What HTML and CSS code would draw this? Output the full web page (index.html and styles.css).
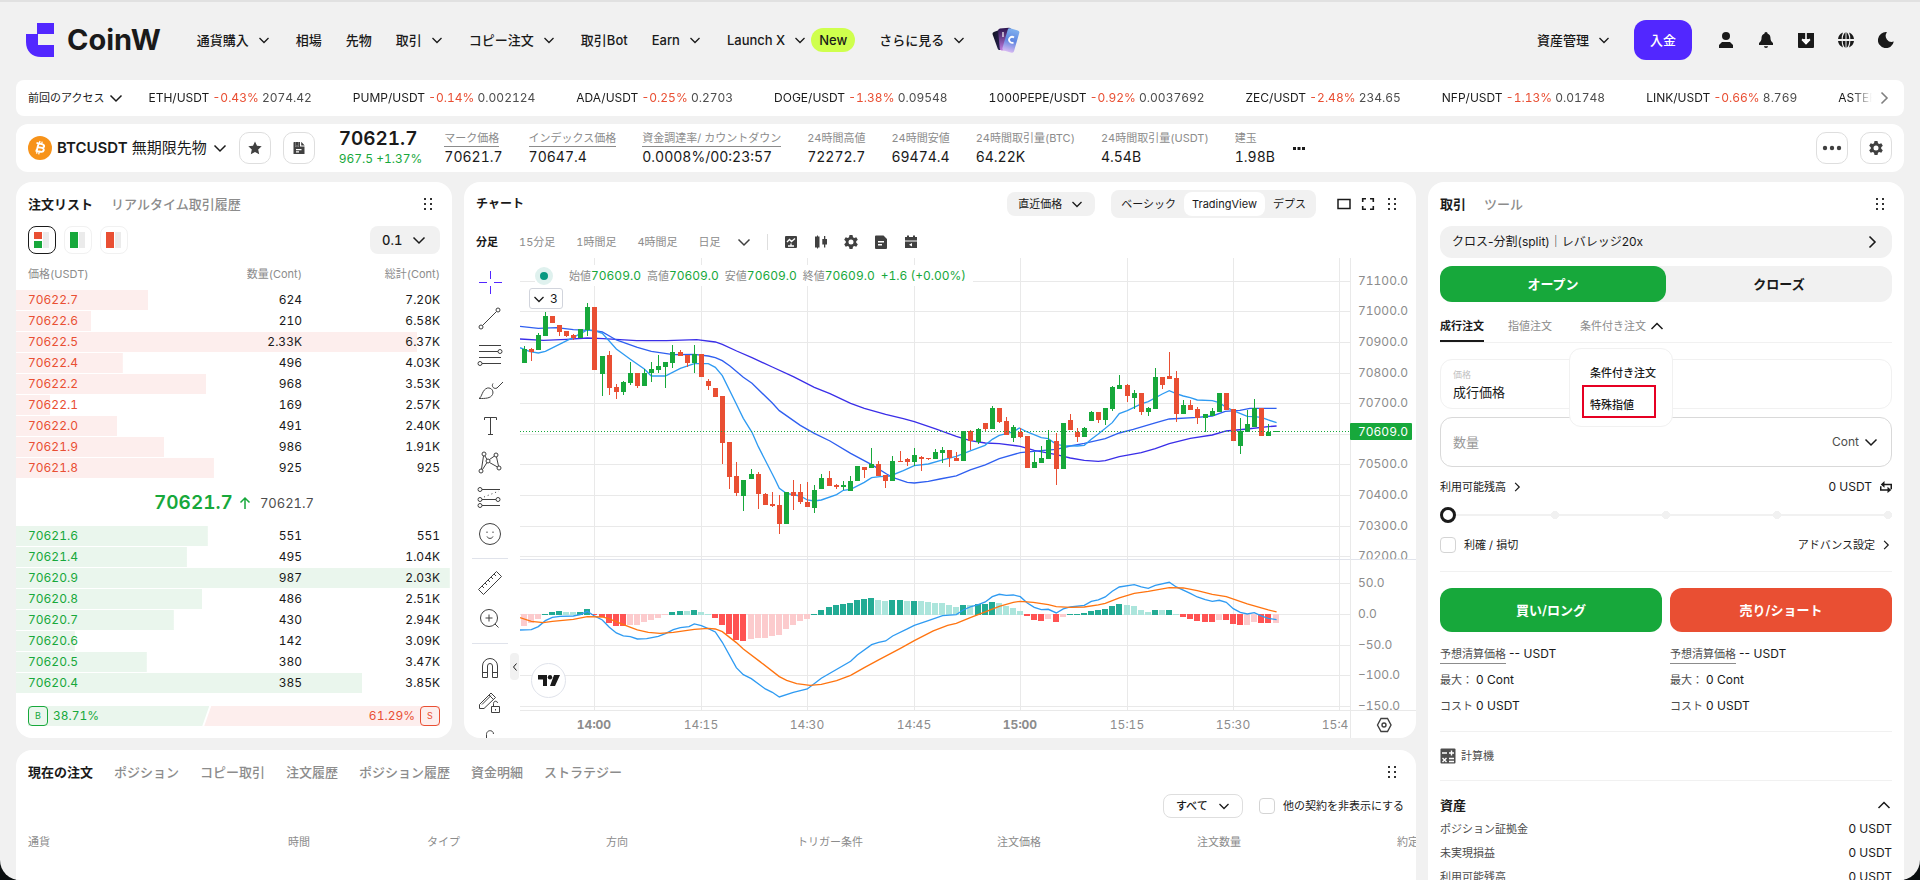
FILE: index.html
```html
<!DOCTYPE html>
<html lang="ja">
<head>
    <meta charset="UTF-8">
    <meta name="viewport" content="width=device-width, initial-scale=1.0">
    <title>BTCUSDT 無期限先物 | CoinW</title>
    <link rel="stylesheet" href="styles.css">
</head>
<body>
    <svg class="sprite" aria-hidden="true">
        <symbol id="chevron" viewBox="0 0 16 16"><path d="M3.500 6l4.500 4.500L12.500 6" fill="none" stroke="currentColor" stroke-width="1.300"/></symbol>
        <symbol id="chevron-bold" viewBox="0 0 16 16"><path d="M2.500 5.500L8 11l5.500-5.500" fill="none" stroke="currentColor" stroke-width="1.500"/></symbol>
        <symbol id="chevron-up" viewBox="0 0 16 16"><path d="M2.500 11L8 5.500l5.500 5.500" fill="none" stroke="currentColor" stroke-width="1.500"/></symbol>
        <symbol id="arrow-right" viewBox="0 0 16 16"><path d="M5.500 2.500L11 8l-5.500 5.500" fill="none" stroke="currentColor" stroke-width="1.600"/></symbol>
        <symbol id="grip" viewBox="0 0 16 16"><path d="M4 2h2v2H4zM10 2h2v2h-2zM4 7h2v2H4zM10 7h2v2h-2zM4 12h2v2H4zM10 12h2v2h-2z" fill="currentColor"/></symbol>
        <symbol id="gear" viewBox="0 0 16 16"><path fill-rule="evenodd" d="M6.500 1h3l.5 2.200 1.200.7 2.100-.7 1.500 2.600-1.600 1.500v1.400l1.600 1.500-1.500 2.600-2.100-.7-1.200.7L9.500 15h-3L6 12.800l-1.200-.7-2.100.7-1.500-2.600 1.600-1.500V7.300L1.200 5.800l1.500-2.600 2.100.7L6 3.200zM8 5.500a2.500 2.500 0 1 0 0 5 2.500 2.500 0 0 0 0-5z" fill="currentColor"/></symbol>
    </svg>

    <div class="window">
        <header class="header">
            <a class="logo" href="#">
                <svg width="28" height="34" viewBox="0 0 28 34" aria-hidden="true"><path d="M11 0h17v11H12v11h16v12H15C6 34 0 28 0 19v-8h11z" fill="#5227ff"/></svg>
                <span>CoinW</span>
            </a>
            <nav class="nav">
                <a href="#">通貨購入<svg class="icon"><use href="#chevron"/></svg></a>
                <a href="#">相場</a>
                <a href="#">先物</a>
                <a href="#">取引<svg class="icon"><use href="#chevron"/></svg></a>
                <a href="#">コピー注文<svg class="icon"><use href="#chevron"/></svg></a>
                <a href="#">取引Bot</a>
                <a href="#">Earn<svg class="icon"><use href="#chevron"/></svg></a>
                <a href="#">Launch X<svg class="icon"><use href="#chevron"/></svg><span class="badge">New</span></a>
                <a href="#">さらに見る<svg class="icon"><use href="#chevron"/></svg></a>
                <a href="#" aria-label="カード">
                    <svg width="32" height="28" viewBox="0 0 32 28">
                        <defs>
                            <linearGradient id="card-a" x1="0" y1="0" x2="1" y2="1"><stop offset="0" stop-color="#10121f"/><stop offset="1" stop-color="#3b2f7a"/></linearGradient>
                            <linearGradient id="card-b" x1="0" y1="0" x2="0" y2="1"><stop offset="0" stop-color="#2c1450"/><stop offset="1" stop-color="#c07be0"/></linearGradient>
                            <linearGradient id="card-c" x1="0" y1="0" x2="0" y2="1"><stop offset="0" stop-color="#7fb0ee"/><stop offset=".5" stop-color="#5f86e0"/><stop offset="1" stop-color="#d5b8f2"/></linearGradient>
                        </defs>
                        <rect x="4" y="4" width="11" height="19" rx="2" transform="rotate(-20 10 14)" fill="url(#card-a)"/>
                        <rect x="8" y="2" width="13" height="22" rx="2" transform="rotate(-5 15 14)" fill="url(#card-b)"/>
                        <path d="M12 6v5" stroke="#fff" stroke-width="1.200"/>
                        <rect x="14" y="3" width="12" height="23" rx="2" transform="rotate(16 20 14)" fill="url(#card-c)"/>
                        <path d="M23 11.500a3 3 0 1 0-.5 5" fill="none" stroke="#fff" stroke-width="1.800"/>
                    </svg>
                </a>
            </nav>
            <div class="account">
                <a href="#">資産管理<svg class="icon"><use href="#chevron"/></svg></a>
                <button class="deposit" type="button">入金</button>
                <button class="plain" type="button" aria-label="アカウント"><svg class="icon" viewBox="0 0 16 16"><circle cx="8" cy="4" r="4" fill="currentColor"/><path d="M4 10h8l3 3v3H1v-3z" fill="currentColor"/></svg></button>
                <button class="plain" type="button" aria-label="通知"><svg class="icon" viewBox="0 0 16 16"><path d="M8 0c1.200 0 1.500.8 1.500 1.600C12 2.600 12.500 4.500 12.500 6.500c0 2 1 3 2.500 4.500v2H1v-2c1.500-1.500 2.500-2.500 2.500-4.500 0-2 .5-3.900 3-4.900C6.500.8 6.800 0 8 0zM6 14.300h4c0 1-1 1.700-2 1.700s-2-.7-2-1.700z" fill="currentColor"/></svg></button>
                <button class="plain" type="button" aria-label="ダウンロード"><svg class="icon" viewBox="0 0 16 16"><path d="M0 1h5.500v5L3.800 7.200 8 11.800l4.200-4.600L10.500 6V1H16v14a1 1 0 0 1-1 1H1a1 1 0 0 1-1-1z" fill="currentColor"/><path d="M8 1v10.500M4 7.500l4 4 4-4" fill="none" stroke="#fff" stroke-width="1.600"/><path d="M5 1h2.200v6H5zM8.800 1H11v6H8.800z" fill="currentColor"/></svg></button>
                <button class="plain" type="button" aria-label="言語"><svg class="icon" viewBox="0 0 16 16"><path d="M3.700 7H0a8 8 0 0 1 5-6.400A14 14 0 0 0 3.700 7zM4.700 7C4.900 3.500 6 1 7.500.2V7zM8.500.2C10 1 11.100 3.500 11.300 7H8.500zM11 .6A8 8 0 0 1 16 7h-3.700A14 14 0 0 0 11 .6zM0 9h3.700A14 14 0 0 0 5 15.400 8 8 0 0 1 0 9zM4.700 9h2.800v6.800C6 15 4.900 12.500 4.700 9zM8.500 9h2.800c-.2 3.500-1.300 6-2.800 6.800zM12.300 9H16a8 8 0 0 1-5 6.400A14 14 0 0 0 12.300 9z" fill="currentColor"/></svg></button>
                <button class="plain" type="button" aria-label="ダークモード"><svg class="icon" viewBox="0 0 16 16"><path d="M9 .2A6 6 0 0 0 15.800 9.500 8 8 0 1 1 9 .2z" fill="currentColor"/></svg></button>
            </div>
        </header>

        <div class="ticker">
            <button class="ticker-label" type="button">前回のアクセス<svg class="icon"><use href="#chevron-bold"/></svg></button>
            <div class="ticker-list">
                <a href="#">ETH/USDT <em>-0.43%</em> <span>2074.42</span></a>
                <a href="#">PUMP/USDT <em>-0.14%</em> <span>0.002124</span></a>
                <a href="#">ADA/USDT <em>-0.25%</em> <span>0.2703</span></a>
                <a href="#">DOGE/USDT <em>-1.38%</em> <span>0.09548</span></a>
                <a href="#">1000PEPE/USDT <em>-0.92%</em> <span>0.0037692</span></a>
                <a href="#">ZEC/USDT <em>-2.48%</em> <span>234.65</span></a>
                <a href="#">NFP/USDT <em>-1.13%</em> <span>0.01748</span></a>
                <a href="#">LINK/USDT <em>-0.66%</em> <span>8.769</span></a>
                <a href="#">ASTER/USDT</a>
            </div>
            <button class="plain ticker-next" type="button" aria-label="次へ"><svg class="icon"><use href="#arrow-right"/></svg></button>
        </div>

        <div class="symbol-bar">
            <button class="symbol" type="button">
                <svg width="24" height="24" viewBox="0 0 24 24" aria-hidden="true"><circle cx="12" cy="12" r="12" fill="#f7931a"/><path d="M8.500 6.800l6 1.500c2.500.8 2 3.700-.5 3.500 3 .8 2 4.700-1.500 3.900l-5-1.200M10.600 7.300l-2 8M9.500 11l4.500.9" fill="none" stroke="#fff" stroke-width="1.900"/><path d="M12 5l-.6 2.500M14.200 5.600l-.6 2.500M9.200 15l-.6 2.700M11.300 15.600l-.6 2.700" fill="none" stroke="#fff" stroke-width="1.300"/></svg>
                <strong>BTCUSDT <span>無期限先物</span></strong>
                <svg class="icon"><use href="#chevron-bold"/></svg>
            </button>
            <button class="square" type="button" aria-label="お気に入り"><svg class="icon" viewBox="0 0 16 16"><path d="M8 1.500l2 4.300 4.700.5-3.500 3.200 1 4.700L8 11.900l-4.200 2.300 1-4.700L1.300 6.300 6 5.800z" fill="currentColor"/></svg></button>
            <button class="square" type="button" aria-label="契約情報"><svg class="icon" viewBox="0 0 16 16"><path fill-rule="evenodd" d="M3 2h1.500v5L6 5.800 7.500 7V2H9v4.500h4.500V14h-11V2.500zM5 9v1.200h5.500V9zM5 11.300v1.200h3v-1.200zM10.200 1.800l3.500 3.600h-3.500z" fill="currentColor"/><path d="M4.500 2h3v4.500L6 5.500 4.500 6.500z" fill="currentColor"/></svg></button>
            <div class="last-price">
                <strong>70621.7</strong>
                <span>967.5 +1.37%</span>
            </div>
            <dl class="stats">
                <div><dt class="hint">マーク価格</dt><dd>70621.7</dd></div>
                <div><dt class="hint">インデックス価格</dt><dd>70647.4</dd></div>
                <div><dt class="hint">資金調達率/ カウントダウン</dt><dd>0.0008%/00:23:57</dd></div>
                <div><dt>24時間高値</dt><dd>72272.7</dd></div>
                <div><dt>24時間安値</dt><dd>69474.4</dd></div>
                <div><dt>24時間取引量(BTC)</dt><dd>64.22K</dd></div>
                <div><dt>24時間取引量(USDT)</dt><dd>4.54B</dd></div>
                <div><dt>建玉</dt><dd>1.98B</dd></div>
            </dl>
            <button class="plain" type="button" aria-label="詳細"><svg class="icon" viewBox="0 0 16 16"><path d="M2 7h3v3H2zM6.500 7h3v3h-3zM11 7h3v3h-3z" fill="currentColor"/></svg></button>
            <div class="bar-actions">
                <button class="square" type="button" aria-label="その他"><svg width="20" height="16" viewBox="0 0 20 16"><circle cx="3" cy="8" r="2.200" fill="currentColor"/><circle cx="10" cy="8" r="2.200" fill="currentColor"/><circle cx="17" cy="8" r="2.200" fill="currentColor"/></svg></button>
                <button class="square" type="button" aria-label="設定"><svg class="icon"><use href="#gear"/></svg></button>
            </div>
        </div>

        <main class="workspace">
            <div class="left">
                <div class="upper">
                    <section class="panel book">
                        <div class="panel-head">
                            <button class="tab active" type="button">注文リスト</button>
                            <button class="tab" type="button">リアルタイム取引履歴</button>
                            <svg class="icon grip"><use href="#grip"/></svg>
                        </div>
                        <div class="book-tools">
                            <button class="view active" type="button" aria-label="両方"><svg class="icon" viewBox="0 0 16 16"><path d="M0 0h8v7H0z" fill="#e94f33"/><path d="M0 9h8v7H0z" fill="#17a83b"/><path d="M9 0h6v16H9z" fill="#ebebeb"/></svg></button>
                            <button class="view" type="button" aria-label="買い"><svg class="icon" viewBox="0 0 16 16"><path d="M0 0h8v16H0z" fill="#17a83b"/><path d="M9 0h6v16H9z" fill="#ebebeb"/></svg></button>
                            <button class="view" type="button" aria-label="売り"><svg class="icon" viewBox="0 0 16 16"><path d="M0 0h8v16H0z" fill="#e94f33"/><path d="M9 0h6v16H9z" fill="#ebebeb"/></svg></button>
                            <span class="select step">
                                <select aria-label="価格刻み"><option>0.1</option></select>
                                <svg class="icon"><use href="#chevron-bold"/></svg>
                            </span>
                        </div>
                        <table class="orders asks">
                            <thead><tr><th>価格(USDT)</th><th>数量(Cont)</th><th>総計(Cont)</th></tr></thead>
                            <tbody id="asks"></tbody>
                        </table>
                        <div class="mid-price">
                            <strong>70621.7</strong>
                            <svg width="12" height="14" viewBox="0 0 12 14" aria-hidden="true"><path d="M6 13V2M1.500 6.500L6 2l4.500 4.500" fill="none" stroke="#17a83b" stroke-width="1.500"/></svg>
                            <span>70621.7</span>
                        </div>
                        <table class="orders bids">
                            <tbody id="bids"></tbody>
                        </table>
                        <div class="ratio">
                            <div class="ratio-buy"><b>B</b>38.71%</div>
                            <div class="ratio-sell">61.29%<b>S</b></div>
                        </div>
                    </section>

                    <section class="panel chart">
                        <div class="panel-head">
                            <h2>チャート</h2>
                            <span class="select price-type">
                                <select aria-label="価格種別"><option>直近価格</option></select>
                                <svg class="icon"><use href="#chevron"/></svg>
                            </span>
                            <div class="segmented">
                                <button type="button">ベーシック</button>
                                <button class="active" type="button">TradingView</button>
                                <button type="button">デプス</button>
                            </div>
                            <button class="plain" type="button" aria-label="ワイド"><svg class="icon" viewBox="0 0 16 16"><path d="M2 3.500h12v9H2z" fill="none" stroke="currentColor" stroke-width="1.500"/></svg></button>
                            <button class="plain" type="button" aria-label="全画面"><svg class="icon" viewBox="0 0 16 16"><path d="M2.700 6V2.700H6M10 2.700h3.300V6M13.300 10v3.300H10M6 13.300H2.700V10" fill="none" stroke="currentColor" stroke-width="1.600"/></svg></button>
                            <svg class="icon grip"><use href="#grip"/></svg>
                        </div>
                        <div class="intervals">
                            <button class="active" type="button">分足</button>
                            <button type="button">15分足</button>
                            <button type="button">1時間足</button>
                            <button type="button">4時間足</button>
                            <button type="button">日足</button>
                            <button class="plain" type="button" aria-label="その他の足"><svg class="icon"><use href="#chevron-bold"/></svg></button>
                            <i class="rule"></i>
                            <div class="chart-actions">
                                <button class="plain" type="button" aria-label="インジケーター"><svg class="icon" viewBox="0 0 16 16"><path d="M3 2h10a1 1 0 0 1 1 1v10a1 1 0 0 1-1 1H3a1 1 0 0 1-1-1V3a1 1 0 0 1 1-1z" fill="currentColor"/><path d="M4 8l2.500-2.500 2 2L12 4.500M5 12h6M8 9.500v2" fill="none" stroke="#fff" stroke-width="1.300"/></svg></button>
                                <button class="plain" type="button" aria-label="ローソク足"><svg class="icon" viewBox="0 0 16 16"><path d="M2 2.500h2v-1h1v1h1.500v11H5v1H4v-1H2zM11 2h1.300v3H14v5.500h-1.700v3H11v-3H9.300V5H11z" fill="currentColor"/></svg></button>
                                <button class="plain" type="button" aria-label="チャート設定"><svg class="icon"><use href="#gear"/></svg></button>
                                <button class="plain" type="button" aria-label="注文表示"><svg class="icon" viewBox="0 0 16 16"><path fill-rule="evenodd" d="M3 1.500h7.500L14 5v9a1 1 0 0 1-1 1H3a1 1 0 0 1-1-1V2.500a1 1 0 0 1 1-1zM5 7v1.500h6V7zM5 10v1.500h4V10z" fill="currentColor"/></svg></button>
                                <button class="plain" type="button" aria-label="カレンダー"><svg class="icon" viewBox="0 0 16 16"><path fill-rule="evenodd" d="M4 1.500h2V3h4V1.500h2V3h2v3.500H2V3h2zM2 7.500h12v6.500H2zM9 9l-3 1.700 3 1.800z" fill="currentColor"/></svg></button>
                            </div>
                        </div>
                        <div class="chart-body">
                            <div class="draw-tools">
                                <button class="cross" type="button" aria-label="十字線"><svg viewBox="0 0 28 28"><path d="M14.500 3v8M14.500 18v8M3 14.500h8M18 14.500h8"/></svg></button>
                                <button type="button" aria-label="トレンドライン"><svg viewBox="0 0 28 28"><circle cx="5" cy="23" r="2"/><circle cx="22" cy="6" r="2"/><path d="M6.500 21.500l14-14"/></svg></button>
                                <button type="button" aria-label="フィボナッチ"><svg viewBox="0 0 28 28"><path d="M3 5.500h22M3 11.500h19M3 17.500h22M6 23.500h19"/><circle cx="24" cy="11.500" r="2"/><circle cx="4" cy="23.500" r="2"/></svg></button>
                                <button type="button" aria-label="ブラシ"><svg viewBox="0 0 28 28"><path d="M3 22.500c3-1 3-9 8.500-10.500 4-.5 6.500 3 5 6.500-2 4-7 4-13.500 4zM17 7.500c-2 3 1 6 4 4.500l6-6"/></svg></button>
                                <button type="button" aria-label="テキスト"><svg viewBox="0 0 28 28"><path d="M8.500 8V5.500h12V8M14.500 5.500v17M12 22.500h5"/></svg></button>
                                <button type="button" aria-label="パターン"><svg viewBox="0 0 28 28"><circle cx="5" cy="23" r="2"/><circle cx="8" cy="6" r="2"/><circle cx="20" cy="7" r="2"/><circle cx="23" cy="20" r="2"/><circle cx="12" cy="13" r="2"/><path d="M5.500 21L7.500 8M9 8l2 3.500M13.500 11.500l5-3.500M20.500 9l2 9M13.500 14.500l8 4.500M6.500 21.500l4.500-7"/></svg></button>
                                <button type="button" aria-label="予測"><svg viewBox="0 0 28 28"><circle cx="4" cy="5.500" r="2"/><circle cx="4" cy="15.500" r="2"/><circle cx="4" cy="21.500" r="2"/><circle cx="22" cy="15.500" r="2"/><path d="M6 5.500h18M6 15.500h14M6 21.500h18"/><path d="M8 13l15-6" stroke-dasharray="1 3"/></svg></button>
                                <button type="button" aria-label="絵文字"><svg viewBox="0 0 28 28"><circle cx="14" cy="14" r="10.500"/><path d="M11 16.500c1 2.500 5 2.500 6 0M11 11.500v1.500M17 11.500v1.500"/></svg></button>
                                <i></i>
                                <button type="button" aria-label="計測"><svg viewBox="0 0 28 28"><path d="M2.500 20.500l18-18 5 5-18 18zM6 17l2 2M9 14l2 2M12 11l2 2M15 8l2 2M18 5l2 2"/></svg></button>
                                <button type="button" aria-label="拡大"><svg viewBox="0 0 28 28"><circle cx="13" cy="13" r="8.500"/><path d="M19 19l3.500 3.500M13 9.500v7M9.500 13h7"/></svg></button>
                                <i></i>
                                <button type="button" aria-label="マグネット"><svg viewBox="0 0 28 28"><path d="M6.500 23.500V12a7.500 7.500 0 0 1 15 0v11.500h-5V12a2.500 2.500 0 0 0-5 0v11.500zM6.500 18.500h5M16.500 18.500h5"/></svg></button>
                                <button type="button" aria-label="描画を固定"><svg viewBox="0 0 28 28"><path d="M3.500 18.500v-4L15 3l4.500 4.500L8 18.500zM13 5l4.500 4.500M6 14.500l9-9M15.500 16.500h8v6h-8zM17.500 16.500v-3c0-3 4-3 4-.5M19.500 19v1.500"/></svg></button>
                                <button type="button" aria-label="ロック"><svg viewBox="0 0 28 28"><path d="M10.500 14V8.500c0-5 7-5 7-.5M6.500 14h15v9h-15z"/></svg></button>
                            </div>
                            <div class="plot">
                                <svg id="plot" viewBox="0 0 896 480" role="img" aria-label="BTCUSDT 1分足チャート"></svg>
                                <div class="legend">
                                    <i class="live"></i>
                                    <span>始値<b>70609.0</b></span>
                                    <span>高値<b>70609.0</b></span>
                                    <span>安値<b>70609.0</b></span>
                                    <span>終値<b>70609.0</b></span>
                                    <b>+1.6 (+0.00%)</b>
                                </div>
                                <button class="indicators" type="button"><svg class="icon"><use href="#chevron"/></svg>3</button>
                                <button class="collapse" type="button" aria-label="ツールバーを隠す"><svg width="6" height="8" viewBox="0 0 6 8"><path d="M4.500 0.500L1.500 4l3 3.500" fill="none" stroke="currentColor"/></svg></button>
                                <a class="tv" href="#" aria-label="TradingView"><svg width="22" height="12" viewBox="0 0 22 12"><path d="M0 0h9v11H5V4.500H0zM16 0h6l-5 11h-5z" fill="#1a1a1a"/><circle cx="12" cy="2.200" r="2.200" fill="#1a1a1a"/></svg></a>
                            </div>
                        </div>
                    </section>
                </div>

                <section class="panel positions">
                    <div class="panel-head">
                        <button class="tab active" type="button">現在の注文</button>
                        <button class="tab" type="button">ポジション</button>
                        <button class="tab" type="button">コピー取引</button>
                        <button class="tab" type="button">注文履歴</button>
                        <button class="tab" type="button">ポジション履歴</button>
                        <button class="tab" type="button">資金明細</button>
                        <button class="tab" type="button">ストラテジー</button>
                        <svg class="icon grip"><use href="#grip"/></svg>
                    </div>
                    <div class="filters">
                        <span class="select outlined">
                            <select aria-label="種別"><option>すべて</option></select>
                            <svg class="icon"><use href="#chevron"/></svg>
                        </span>
                        <label class="check"><input type="checkbox">他の契約を非表示にする</label>
                    </div>
                    <table class="open-orders">
                        <thead>
                            <tr><th class="w-coin">通貨</th><th class="w-time">時間</th><th class="w-type">タイプ</th><th class="w-side">方向</th><th>トリガー条件</th><th>注文価格</th><th>注文数量</th><th class="w-filled">約定</th></tr>
                        </thead>
                    </table>
                </section>
            </div>

            <section class="panel trade">
                <div class="panel-head">
                    <button class="tab active" type="button">取引</button>
                    <button class="tab" type="button">ツール</button>
                    <svg class="icon grip"><use href="#grip"/></svg>
                </div>
                <button class="leverage" type="button">クロス-分割(split)｜レバレッジ20x<svg class="icon"><use href="#arrow-right"/></svg></button>
                <div class="open-close">
                    <button class="active" type="button">オープン</button>
                    <button type="button">クローズ</button>
                </div>
                <div class="order-types">
                    <button class="active" type="button">成行注文</button>
                    <button type="button">指値注文</button>
                    <button class="more" type="button" aria-expanded="true">条件付き注文<svg class="icon"><use href="#chevron-up"/></svg></button>
                    <div class="type-menu">
                        <button type="button">条件付き注文</button>
                        <button class="marked" type="button">特殊指値</button>
                    </div>
                </div>
                <div class="field price">
                    <label for="price">価格</label>
                    <input id="price" type="text" value="成行価格" readonly>
                </div>
                <div class="field amount">
                    <input type="text" placeholder="数量" aria-label="数量">
                    <span class="select">
                        <select aria-label="単位"><option>Cont</option></select>
                        <svg class="icon"><use href="#chevron-bold"/></svg>
                    </span>
                </div>
                <div class="row balance">
                    <a href="#">利用可能残高<svg class="icon small"><use href="#arrow-right"/></svg></a>
                    <span>0 USDT<svg class="icon small" viewBox="0 0 16 16"><path d="M15 11V4.500H5M1 7v5h10" fill="none" stroke="currentColor" stroke-width="2"/><path d="M6 0v9L1 4.500zM10 7.500v8.500l5-4z" fill="currentColor"/></svg></span>
                </div>
                <input class="slider" type="range" min="0" max="100" value="0" aria-label="数量の割合">
                <div class="row tpsl">
                    <label class="check"><input type="checkbox">利確 / 損切</label>
                    <a href="#">アドバンス設定<svg class="icon small"><use href="#arrow-right"/></svg></a>
                </div>
                <div class="submit">
                    <div>
                        <button class="buy" type="button">買い/ロング</button>
                        <p><span class="hint">予想清算価格</span> <b>-- USDT</b></p>
                        <p>最大： <b>0 Cont</b></p>
                        <p>コスト <b>0 USDT</b></p>
                    </div>
                    <div>
                        <button class="sell" type="button">売り/ショート</button>
                        <p><span class="hint">予想清算価格</span> <b>-- USDT</b></p>
                        <p>最大： <b>0 Cont</b></p>
                        <p>コスト <b>0 USDT</b></p>
                    </div>
                </div>
                <button class="calculator" type="button"><svg class="icon" viewBox="0 0 16 16"><rect x=".5" y=".5" width="15" height="15" rx="1" fill="currentColor"/><path d="M2 5h5M9 5h5M11.500 2.500v5M2.500 10l4 4M6.500 10l-4 4M9 10.500h5M9 13.500h5" fill="none" stroke="#fff" stroke-width="1.400"/></svg>計算機</button>
                <div class="row assets-head">
                    <h3>資産</h3>
                    <svg class="icon"><use href="#chevron-up"/></svg>
                </div>
                <div class="row asset"><span>ポジション証拠金</span><b>0 USDT</b></div>
                <div class="row asset"><span>未実現損益</span><b>0 USDT</b></div>
                <div class="row asset"><span>利用可能残高</span><b>0 USDT</b></div>
            </section>
        </main>
    </div>
    <script src="script.js"></script>
</body>
</html>
```

FILE: styles.css
```css
* {
    box-sizing: border-box;
}

html {
    background: #0b0f10;
}

body {
    margin: 0;
    color: #1a1a1a;
    font-family: Inter, "Noto Sans CJK JP", sans-serif;
    font-size: 12px;
    font-variant-numeric: tabular-nums;
    line-height: 16px;
}

button, input, select {
    margin: 0;
    padding: 0;
    border: 0;
    background: none;
    color: inherit;
    font: inherit;
}

button, select {
    cursor: pointer;
    white-space: nowrap;
}

a {
    color: inherit;
    text-decoration: none;
}

h2, h3, p, dl, dd {
    margin: 0;
}

.sprite {
    position: absolute;
    width: 0;
    height: 0;
}

.icon {
    flex: none;
    width: 16px;
    height: 16px;
}

.icon.small {
    width: 12px;
    height: 12px;
}

.window {
    height: 100vh;
    padding: 0 16px;
    overflow: hidden;
    border-top: 2px solid #e1e1e1;
    border-radius: 0 0 20px 20px;
    background: #f1f1f1;
}

.plain {
    display: flex;
}

/* header */

.header {
    display: flex;
    align-items: center;
    height: 78px;
    padding: 0 10px 2px;
    font-size: 13px;
    font-weight: 500;
}

.header a {
    display: flex;
    align-items: center;
}

.header a .icon {
    margin-left: 7px;
}

.logo {
    gap: 13px;
    margin-right: 36px;
    font-size: 29px;
    font-weight: 700;
}

.nav {
    display: flex;
    align-items: center;
    gap: 24px;
}

.badge {
    margin-left: 3px;
    padding: 4px 8px;
    border-radius: 12px;
    background: #cfff4d;
}

.account {
    display: flex;
    align-items: center;
    gap: 24px;
    margin-left: auto;
}

.account a {
    margin-right: -2px;
}

.deposit {
    height: 40px;
    margin-right: 2px;
    padding: 0 16px;
    border-radius: 12px;
    background: #5227ff;
    color: #fff;
}

/* recent symbols */

.ticker {
    display: flex;
    align-items: center;
    height: 36px;
    margin-bottom: 8px;
    padding: 0 12px;
    border-radius: 8px;
    background: #fff;
}

.ticker-label {
    display: flex;
    align-items: center;
    gap: 4px;
    margin-right: 24px;
    font-size: 11px;
}

.ticker-list {
    display: flex;
    flex: 1;
    gap: 41px;
    min-width: 0;
    overflow: hidden;
    white-space: nowrap;
    -webkit-mask-image: linear-gradient(to left, transparent, #000 20px);
    mask-image: linear-gradient(to left, transparent, #000 20px);
}

.ticker-list em {
    color: #e94f33;
    font-style: normal;
}

.ticker-list span {
    color: #4d4d4d;
}

.ticker-next {
    margin-left: 4px;
    color: #808080;
}

/* symbol bar */

.symbol-bar {
    display: flex;
    align-items: center;
    height: 48px;
    margin-bottom: 10px;
    padding: 0 12px;
    border-radius: 12px;
    background: #fff;
}

.symbol {
    display: flex;
    align-items: center;
    gap: 5px;
    margin-right: 11px;
    font-size: 15px;
}

.symbol strong {
    font-weight: 600;
}

.symbol strong span {
    font-weight: 400;
}

.square {
    display: flex;
    align-items: center;
    justify-content: center;
    width: 32px;
    height: 32px;
    margin-right: 12px;
    border: 1px solid #dedede;
    border-radius: 10px;
    color: #404040;
}

.last-price {
    display: flex;
    flex-direction: column;
    gap: 2px;
    margin: 0 22px 0 12px;
}

.last-price strong {
    font-size: 19px;
    font-weight: 600;
    line-height: 20px;
}

.last-price span {
    color: #17a83b;
}

.stats {
    display: flex;
    gap: 26px;
    margin-right: 16px;
}

.stats dt {
    width: max-content;
    color: #8c8c8c;
    font-size: 11px;
    border-bottom: 1px solid transparent;
}

.stats dt.hint {
    border-color: #8c8c8c;
}

.stats dd {
    font-size: 14px;
    line-height: 20px;
}

.bar-actions {
    display: flex;
    margin-left: auto;
}

.bar-actions .square:last-child {
    margin-right: 0;
}

/* workspace */

.workspace {
    display: grid;
    grid-template-columns: minmax(0, 1fr) 476px;
    gap: 12px;
}

.left {
    min-width: 0;
}

.upper {
    display: grid;
    grid-template-columns: 436px minmax(0, 1fr);
    gap: 12px;
    margin-bottom: 12px;
}

.panel {
    border-radius: 16px;
    background: #fff;
    overflow: hidden;
}

.panel-head {
    display: flex;
    align-items: center;
    height: 44px;
    padding: 0 16px 0 12px;
}

.tab {
    margin-right: 18px;
    color: #8c8c8c;
    font-size: 13px;
    font-weight: 500;
}

.tab.active {
    color: #1a1a1a;
    font-weight: 600;
}

.grip {
    margin-left: auto;
    color: #333;
}

.select {
    position: relative;
    display: inline-flex;
    align-items: center;
    border-radius: 8px;
}

.select select {
    height: 100%;
    padding-right: 20px;
    appearance: none;
}

.select .icon {
    position: absolute;
    right: 0;
    pointer-events: none;
}

/* order book */

.book-tools {
    display: flex;
    gap: 8px;
    height: 28px;
    padding: 0 12px;
}

.view {
    display: flex;
    align-items: center;
    justify-content: center;
    width: 28px;
    height: 28px;
    border: 1px solid #f1f1f1;
    border-radius: 8px;
}

.view.active {
    border-color: #1a1a1a;
}

.step {
    margin-left: auto;
    background: #f1f1f1;
}

.step select {
    padding: 0 37px 0 12px;
    font-size: 13px;
    font-weight: 500;
}

.step .icon {
    right: 13px;
}

.orders {
    width: 100%;
    border-collapse: collapse;
    table-layout: fixed;
}

.orders th {
    height: 36px;
    padding: 4px 0 0;
    color: #8c8c8c;
    font-size: 11px;
    font-weight: 400;
}

.orders tbody tr {
    height: 21px;
    background-repeat: no-repeat;
    background-size: var(--depth) 20px;
}

.asks tbody tr {
    background-image: linear-gradient(#fdeeed, #fdeeed);
}

.bids tbody tr {
    background-image: linear-gradient(#eaf6ed, #eaf6ed);
}

.orders td {
    padding: 0 0 1px;
    line-height: 20px;
}

.orders th:nth-child(n+2), .orders td:nth-child(n+2) {
    text-align: right;
}

.orders th:first-child, .orders td:first-child {
    padding-left: 12px;
    text-align: left;
}

.orders th:last-child, .orders td:last-child {
    width: 150px;
    padding-right: 12px;
}

.asks td:first-child {
    color: #e94f33;
}

.bids td:first-child {
    color: #17a83b;
}

.mid-price {
    display: flex;
    align-items: center;
    justify-content: center;
    gap: 6px;
    height: 47px;
}

.mid-price strong {
    color: #17a83b;
    font-size: 19px;
    font-weight: 600;
}

.mid-price span {
    margin-left: 3px;
    color: #4d4d4d;
    font-size: 13px;
}

.ratio {
    display: flex;
    margin: 12px;
    line-height: 20px;
}

.ratio div {
    display: flex;
    gap: 5px;
}

.ratio b {
    width: 20px;
    border: 1px solid;
    border-radius: 4px;
    font-size: 9px;
    font-weight: 400;
    line-height: 18px;
    text-align: center;
}

.ratio-buy {
    width: 44%;
    background: #eaf6ed;
    clip-path: polygon(0 0, 100% 0, calc(100% - 7px) 100%, 0 100%);
    color: #17a83b;
}

.ratio-sell {
    flex: 1;
    justify-content: flex-end;
    margin-left: -5px;
    background: #fdeeed;
    clip-path: polygon(7px 0, 100% 0, 100% 100%, 0 100%);
    color: #e94f33;
}

/* chart */

.chart {
    display: flex;
    flex-direction: column;
}

.chart h2 {
    margin-right: auto;
    font-size: 12px;
    font-weight: 600;
}

.chart .panel-head .plain {
    margin-right: 8px;
}

.chart .grip {
    margin-left: 0;
}

.price-type {
    height: 24px;
    margin-right: 16px;
    background: #f1f1f1;
    font-size: 11px;
}

.price-type select {
    padding: 0 33px 0 11px;
}

.price-type .icon {
    right: 10px;
}

.segmented {
    display: flex;
    margin-right: 20px;
    padding: 2px;
    border-radius: 8px;
    background: #f1f1f1;
    font-size: 11px;
}

.segmented button {
    height: 24px;
    padding: 0 8px;
    border-radius: 8px;
}

.segmented button.active {
    background: #fff;
}

.intervals {
    display: flex;
    align-items: center;
    gap: 21px;
    height: 32px;
    padding-left: 12px;
    color: #8c8c8c;
    font-size: 11px;
}

.intervals .active {
    color: #1a1a1a;
    font-weight: 600;
}

.intervals .plain {
    color: #404040;
}

.intervals > .plain {
    margin: 0 -6px;
}

.rule {
    width: 1px;
    height: 16px;
    background: #dedede;
}

.chart-actions {
    display: flex;
    gap: 14px;
    margin-left: -6px;
}

.chart-body {
    display: flex;
    height: 480px;
}

.draw-tools {
    display: flex;
    flex: none;
    flex-direction: column;
    align-items: center;
    width: 56px;
    height: 480px;
    padding: 6px 4px 0 0;
    overflow: hidden;
}

.draw-tools button {
    flex: none;
    width: 28px;
    height: 36px;
}

.draw-tools svg {
    display: block;
    width: 28px;
    height: 28px;
    fill: none;
    stroke: #404040;
}

.draw-tools .cross svg {
    stroke: #5227ff;
}

.draw-tools i {
    flex: none;
    width: 36px;
    height: 1px;
    margin: 6px 0;
    background: #e0e3eb;
}

.plot {
    position: relative;
    flex: 1;
    min-width: 0;
}

#plot {
    display: block;
    width: 100%;
}

.grid {
    stroke: #e9e9e9;
}

.divider {
    stroke: #e0e3eb;
}

.up {
    fill: #17a83b;
}

.down {
    fill: #e94f33;
}

.line {
    fill: none;
    stroke-width: 4;
}

.axis {
    fill: #8c8c8c;
    font-size: 12px;
}

.axis.hour {
    font-weight: 700;
}

.last-line {
    stroke: #17a83b;
    stroke-dasharray: 1 2;
}

.last-label {
    fill: #fff;
    font-size: 12px;
}

.legend {
    position: absolute;
    top: 7px;
    left: 15px;
    display: flex;
    align-items: center;
    gap: 6px;
    height: 21px;
    padding-right: 7px;
    background: #fff;
    color: #8c8c8c;
    font-size: 11px;
}

.legend b {
    color: #17a83b;
    font-size: 12px;
    font-weight: 400;
}

.live {
    width: 18px;
    height: 18px;
    margin-right: 10px;
    border: 5px solid #dff1ee;
    border-radius: 50%;
    background: #089981;
}

.indicators {
    position: absolute;
    top: 30px;
    left: 9px;
    display: flex;
    align-items: center;
    gap: 3px;
    height: 21px;
    padding: 0 4px 0 1px;
    border: 1px solid #d1d4dc;
    border-radius: 3px;
    background: #fff;
}

.collapse {
    position: absolute;
    bottom: 58px;
    left: -10px;
    width: 9px;
    height: 27px;
    border-radius: 4px;
    background: #f1f1f1;
}

.tv {
    position: absolute;
    bottom: 40px;
    left: 11px;
    display: flex;
    align-items: center;
    justify-content: center;
    width: 35px;
    height: 35px;
    border: 1px solid #e0e3eb;
    border-radius: 50%;
    background: #fff;
}

/* positions */

.positions {
    height: 400px;
}

.positions .tab {
    margin-right: 21px;
}

.filters {
    display: flex;
    justify-content: flex-end;
    gap: 16px;
    height: 24px;
    padding-right: 12px;
    font-size: 11px;
}

.outlined {
    border: 1px solid #dedede;
}

.outlined select {
    padding: 0 33px 0 12px;
    font-weight: 500;
}

.outlined .icon {
    right: 10px;
}

.check {
    display: flex;
    align-items: center;
    gap: 8px;
}

.check input {
    width: 16px;
    height: 16px;
    border: 1px solid #d4d4d4;
    border-radius: 4px;
    appearance: none;
}

.open-orders {
    width: 1405px;
    border-collapse: collapse;
    table-layout: fixed;
}

.open-orders th {
    width: 200px;
    height: 48px;
    padding: 0;
    color: #8c8c8c;
    font-size: 11px;
    font-weight: 400;
    text-align: left;
    white-space: nowrap;
}

.open-orders .w-coin {
    width: 272px;
    padding-left: 12px;
}

.open-orders .w-time {
    width: 139px;
}

.open-orders .w-type {
    width: 179px;
}

.open-orders .w-side {
    width: 191px;
}

.open-orders .w-filled {
    width: 24px;
}

/* trade */

.trade {
    height: 800px;
    padding: 0 12px;
    font-size: 11px;
    font-variant-numeric: normal;
}

.trade .panel-head {
    padding: 0 4px 0 0;
}

.trade b {
    color: #1a1a1a;
    font-size: 12px;
    font-weight: 400;
}

.leverage {
    display: flex;
    align-items: center;
    justify-content: space-between;
    width: 100%;
    height: 32px;
    margin-bottom: 8px;
    padding: 0 12px;
    border-radius: 12px;
    background: #f1f1f1;
    font-size: 12px;
}

.open-close {
    display: flex;
    height: 36px;
    border-radius: 12px;
    background: #f1f1f1;
    font-size: 13px;
    font-weight: 600;
}

.open-close button {
    flex: 1;
    border-radius: 12px;
}

.open-close .active {
    background: #17a83b;
    color: #fff;
}

.order-types {
    position: relative;
    display: flex;
    gap: 24px;
    height: 41px;
    margin-bottom: 16px;
    padding-top: 9px;
    border-bottom: 1px solid #f1f1f1;
    color: #8c8c8c;
}

.order-types > button {
    border-bottom: 2px solid transparent;
}

.order-types > .active {
    border-color: #1a1a1a;
    color: #1a1a1a;
    font-weight: 600;
}

.more {
    display: flex;
    align-items: center;
    gap: 3px;
    margin-left: 4px;
}

.more .icon {
    color: #1a1a1a;
}

.type-menu {
    position: absolute;
    top: 46px;
    left: 129px;
    z-index: 1;
    width: 104px;
    padding: 8px 12px;
    border: 1px solid #f1f1f1;
    border-radius: 12px;
    background: #fff;
    color: #1a1a1a;
    font-weight: 500;
}

.type-menu button {
    display: block;
    height: 28px;
    padding: 4px 8px 0;
}

.type-menu .marked {
    width: 74px;
    height: 33px;
    padding: 6px 6px 0;
    border: 2px solid #e60023;
    text-align: left;
}

.field {
    height: 50px;
    margin-bottom: 8px;
    padding: 0 12px;
    border: 1px solid #f1f1f1;
    border-radius: 12px;
    font-size: 13px;
}

.price {
    padding-top: 9px;
}

.price label {
    display: block;
    color: #bfbfbf;
    font-size: 9px;
    line-height: 12px;
}

.price input {
    display: block;
    width: 100%;
    height: 20px;
}

.amount {
    display: flex;
    border-color: #d9d9d9;
}

.amount input {
    flex: 1;
    min-width: 0;
}

.amount input::placeholder {
    color: #999;
}

.amount select {
    color: #4d4d4d;
    font-size: 12px;
}

.row {
    display: flex;
    align-items: center;
    justify-content: space-between;
}

.row a, .row span {
    display: flex;
    align-items: center;
    gap: 5px;
}

.balance {
    height: 24px;
}

.balance span {
    gap: 8px;
    font-size: 12px;
}

/* track with a stop at every 25% */
.slider {
    display: block;
    width: 100%;
    height: 16px;
    margin: 8px 0;
    appearance: none;
    background:
        radial-gradient(circle, #f1f1f1 4px, transparent 4px) 107px 50% / 16px 16px no-repeat,
        radial-gradient(circle, #f1f1f1 4px, transparent 4px) 50% 50% / 16px 16px no-repeat,
        radial-gradient(circle, #f1f1f1 4px, transparent 4px) 329px 50% / 16px 16px no-repeat,
        radial-gradient(circle, #f1f1f1 4px, transparent 4px) 440px 50% / 16px 16px no-repeat,
        linear-gradient(#f1f1f1, #f1f1f1) 50% 50% / 100% 2px no-repeat;
}

.slider::-webkit-slider-thumb {
    width: 16px;
    height: 16px;
    border: 3px solid #1a1a1a;
    border-radius: 50%;
    background: #fff;
    appearance: none;
}

.tpsl {
    height: 41px;
    padding-bottom: 13px;
    border-bottom: 1px solid #f1f1f1;
}

.submit {
    display: flex;
    gap: 8px;
    padding: 16px 0 12px;
    border-bottom: 1px solid #f1f1f1;
    color: #4d4d4d;
}

.submit div {
    flex: 1;
}

.submit button {
    width: 100%;
    height: 44px;
    margin-bottom: 9px;
    border-radius: 12px;
    color: #fff;
    font-size: 13px;
    font-weight: 600;
}

.submit p {
    height: 26px;
    line-height: 26px;
}

.submit .hint {
    display: inline-block;
    line-height: 17px;
    border-bottom: 1px solid #8c8c8c;
}

.buy {
    background: #17a83b;
}

.sell {
    background: #e94f33;
}

.calculator {
    display: flex;
    align-items: center;
    gap: 5px;
    width: 100%;
    height: 49px;
    border-bottom: 1px solid #f1f1f1;
    color: #4d4d4d;
}

.assets-head {
    height: 36px;
    padding-top: 12px;
}

.assets-head h3 {
    font-size: 13px;
    font-weight: 600;
}

.asset {
    height: 24px;
    color: #4d4d4d;
}
```

FILE: script.js
```js
const SVG_NS = 'http://www.w3.org/2000/svg';

// price, quantity, total, depth bar (% of the row)
const asks = [
    ['70622.7', '624', '7.20K', 30.3],
    ['70622.6', '210', '6.58K', 17.2],
    ['70622.5', '2.33K', '6.37K', 92],
    ['70622.4', '496', '4.03K', 24.5],
    ['70622.2', '968', '3.53K', 43.6],
    ['70622.1', '169', '2.57K', 7.8],
    ['70622.0', '491', '2.40K', 23.2],
    ['70621.9', '986', '1.91K', 34],
    ['70621.8', '925', '925', 45.4]
];

const bids = [
    ['70621.6', '551', '551', 44],
    ['70621.4', '495', '1.04K', 39.2],
    ['70620.9', '987', '2.03K', 99.5],
    ['70620.8', '486', '2.51K', 42.7],
    ['70620.7', '430', '2.94K', 36.2],
    ['70620.6', '142', '3.09K', 13.5],
    ['70620.5', '380', '3.47K', 30],
    ['70620.4', '385', '3.85K', 79.4]
];

function fillBook(id, rows) {
    const body = document.getElementById(id);
    rows.forEach(([price, qty, total, depth]) => {
        const tr = document.createElement('tr');
        tr.style.setProperty('--depth', depth + '%');
        [price, qty, total].forEach(text => {
            const td = document.createElement('td');
            td.textContent = text;
            tr.appendChild(td);
        });
        body.appendChild(tr);
    });
}

// one candle per minute from 13:50: colour, body top, body bottom, wick top, wick bottom
const candles = `g 507 549 498 549,r 507 516 503 543,g 465 510 459 510,g 408 468 396 468,r 408 430 408 430,r 435 456 435 467,r 453 468 453 471,r 465 474 462 480,g 447 474 447 474,g 381 450 369 467,
r 381 570 381 570,g 528 582 528 648,r 525 624 513 645,r 621 636 612 657,g 606 636 603 645,g 579 609 546 615,r 579 618 579 624,g 579 618 568 618,g 567 579 546 605,g 558 570 525 580,
g 546 561 546 624,g 516 549 495 564,r 516 528 510 528,r 525 549 525 560,g 522 549 495 579,r 522 591 522 591,r 603 618 597 630,r 624 651 624 651,r 648 789 648 852,r 786 892 786 927,
r 888 939 846 948,g 900 948 900 993,g 882 897 866 897,r 882 942 876 987,r 942 975 939 975,r 972 978 936 981,r 975 1032 945 1062,g 936 1032 936 1032,r 936 948 900 990,r 936 966 912 972,
r 966 981 906 981,g 930 984 915 999,g 894 927 882 927,r 894 918 873 918,r 915 921 912 926,g 915 921 903 930,g 903 933 888 933,g 858 903 858 903,r 861 870 861 894,g 852 864 804 864,
r 852 888 843 888,r 885 903 885 924,g 843 903 828 903,r 843 846 813 846,r 837 846 833 858,g 825 846 804 858,r 831 837 828 873,r 834 837 834 840,g 816 837 807 837,g 810 819 801 849,
r 810 834 810 861,r 834 843 816 843,g 753 843 753 843,r 753 783 750 810,g 747 786 744 792,r 729 747 729 753,g 684 747 678 747,r 684 726 684 729,r 723 765 711 765,g 741 774 735 786,
r 756 771 744 774,r 768 864 768 864,g 846 864 816 864,g 834 849 798 849,g 780 837 750 837,r 783 867 759 915,g 729 867 729 867,r 720 750 702 750,r 756 771 744 786,g 744 771 741 771,
g 696 723 693 723,r 696 720 696 729,g 684 720 684 735,g 621 687 618 693,g 615 627 585 627,r 615 648 612 666,g 639 654 630 687,r 639 696 639 705,g 684 696 681 708,g 591 687 564 687,
r 591 615 591 627,r 588 597 516 597,r 594 702 573 726,g 675 702 660 702,r 675 690 660 690,r 687 714 681 732,g 702 714 702 756,g 693 708 684 708,g 639 696 639 696,r 639 690 639 690,
r 687 783 687 783,g 753 798 714 822,g 732 756 690 756,g 684 741 657 741,r 684 768 684 768,g 756 768 732 768,g 753 756 753 756`;

// MACD histogram, upper case = strong colour
const histogram = 'r-35 r-27 r-15 G4 G10 G13 g10 g10 G10 G19 R-3 R-8 R-26 R-35 R-35 r-32 r-32 r-23 r-17 r-11 r-2 G10 G13 g13 G16 g10 g2 R-11 R-32 R-59 R-77 R-80 r-74 r-71 r-71 r-65 r-62 r-44 r-32 r-20 r-14 G2 G16 G25 G31 G34 G37 G46 G49 G52 g46 g43 G46 G46 g43 G43 g43 g40 g37 g37 g31 g25 G31 g31 G34 G34 G40 g37 g28 g21 g13 R-5 R-17 R-20 r-14 R-23 r-8 G2 G2 G7 G13 G16 G19 G28 G34 g31 g28 g16 g10 G16 g16 G16 g2 R-8 R-14 R-20 R-23 R-23 r-17 R-17 R-29 R-32 r-32 r-23 R-26 R-26 r-26';
const histogramColors = { G: '#22ab94', g: '#ace5dc', R: '#ff5252', r: '#fccbcd' };

const lines = [
    ['#3a2ee8', '180,477 250,481 320,478 382,474 430,476 530,482 620,482 710,479 766,486 787,493 830,513 876,533 937,561 1000,590 1063,622 1110,641 1172,670 1213,685 1277,703 1330,716 1363,725 1427,747 1489,769 1531,782 1576,789 1618,791 1681,799 1723,811 1789,824 1831,834 1873,841 1915,844 1936,842 1978,830 2044,818 2086,806 2128,791 2191,775 2257,765 2299,753 2362,747 2425,740 2450,738'],
    ['#2f5ff0', '180,439 235,445 290,443 340,449 403,452 427,456 469,480 532,502 574,514 640,524 703,523 745,528 766,533 787,542 810,558 850,592 876,610 937,669 958,692 1021,736 1063,760 1110,783 1172,820 1235,854 1280,882 1300,893 1342,907 1363,909 1405,904 1440,897 1489,888 1531,870 1576,855 1618,836 1681,818 1744,812 1789,808 1831,798 1873,790 1936,776 1978,759 2020,748 2086,729 2128,717 2212,712 2257,708 2296,694 2340,691 2370,685 2450,685'],
    ['#2f9bf2', '180,503 210,515 235,519 256,514 298,493 340,472 382,450 403,452 427,460 469,507 511,538 553,567 574,588 616,588 661,565 703,551 745,551 766,562 787,587 829,672 850,715 876,757 895,800 945,898 958,925 979,940 1021,948 1042,960 1063,963 1084,960 1130,944 1150,931 1172,928 1213,907 1235,893 1260,890 1290,888 1330,872 1363,857 1405,852 1448,840 1489,829 1531,813 1575,796 1597,778 1618,766 1660,756 1678,744 1702,756 1744,773 1765,776 1789,793 1810,797 1852,798 1873,796 1894,778 1915,762 1957,728 1978,701 2002,692 2044,672 2065,665 2107,642 2128,632 2149,641 2170,648 2191,653 2212,660 2257,662 2278,668 2299,682 2320,692 2362,709 2383,710 2404,712 2425,720 2450,728'],
    ['#2f9bf2', '180,1350 214,1349 235,1340 256,1322 277,1312 300,1309 340,1308 361,1304 382,1294 403,1308 427,1320 448,1342 469,1359 490,1368 511,1370 532,1377 560,1376 595,1369 616,1361 640,1349 661,1343 687,1340 703,1332 724,1337 745,1346 766,1356 787,1387 829,1463 850,1484 874,1496 916,1527 937,1537 958,1551 1000,1537 1042,1527 1084,1495 1172,1444 1192,1425 1235,1394 1256,1387 1277,1383 1298,1368 1342,1347 1363,1336 1405,1322 1448,1307 1489,1304 1510,1290 1531,1281 1555,1274 1576,1266 1597,1250 1618,1243 1639,1246 1660,1245 1681,1250 1702,1269 1723,1282 1744,1289 1765,1288 1789,1299 1810,1287 1831,1281 1873,1276 1894,1264 1915,1260 1936,1251 1957,1234 1978,1221 2023,1214 2044,1221 2065,1225 2086,1216 2128,1207 2149,1221 2191,1240 2212,1251 2236,1259 2257,1264 2278,1261 2299,1267 2320,1286 2341,1297 2362,1302 2383,1298 2404,1308 2425,1315 2450,1319'],
    ['#ff7410', '180,1313 214,1324 250,1328 277,1324 340,1318 382,1310 427,1311 448,1317 490,1334 532,1350 565,1357 600,1360 640,1357 703,1348 745,1345 766,1347 787,1355 829,1388 850,1407 900,1445 958,1490 980,1501 1010,1511 1050,1516 1084,1513 1130,1502 1172,1486 1213,1463 1256,1440 1320,1406 1363,1382 1420,1353 1463,1336 1489,1330 1531,1313 1576,1296 1618,1279 1660,1267 1681,1264 1720,1267 1765,1274 1789,1280 1831,1282 1873,1281 1915,1275 1936,1270 1978,1254 2023,1240 2065,1234 2128,1223 2170,1224 2212,1232 2257,1243 2299,1250 2362,1272 2425,1290 2450,1296']
];

const priceGrid = [[23, '71100.0'], [53, '71000.0'], [84, '70900.0'], [115, '70800.0'], [145, '70700.0'], [176, ''], [206, '70500.0'], [237, '70400.0'], [268, '70300.0'], [298, '70200.0']];
const macdGrid = [[325, '50.0'], [356, '0.0'], [387, '−50.0'], [417, '−100.0'], [448, '−150.0']];
const timeGrid = [[74, '14:00'], [181, '14:15'], [287, '14:30'], [394, '14:45'], [500, '15:00'], [607, '15:15'], [713, '15:30'], [819, '15:45']];

const plot = document.getElementById('plot');
const AXIS_X = 830;
const ZERO_Y = 356;

function add(parent, tag, attrs, text) {
    const el = document.createElementNS(SVG_NS, tag);
    for (const key in attrs) {
        el.setAttribute(key, attrs[key]);
    }
    if (text) {
        el.textContent = text;
    }
    parent.appendChild(el);
    return el;
}

function clip(id, x, y, width, height) {
    const node = add(plot, 'clipPath', { id });
    add(node, 'rect', { x, y, width, height });
}

// candle centres snap to whole pixels
function candleX(i) {
    return 4 + 7 * i + Math.floor(i * 0.0945);
}

// data values are stored in thirds of a pixel
function toY(value) {
    return Math.round(value / 3) - 78;
}

function drawGrid() {
    clip('price-pane', 0, 0, 896, 301);
    clip('macd-pane', 0, 302, 896, 150);
    clip('time-pane', 0, 452, AXIS_X - 2, 28);

    timeGrid.forEach(([x, label]) => {
        add(plot, 'path', { class: 'grid', d: `M${x + 0.5} 0V452` });
        const g = add(plot, 'g', { 'clip-path': 'url(#time-pane)' });
        add(g, 'text', { class: label.endsWith(':00') ? 'axis hour' : 'axis', x, y: 471, 'text-anchor': 'middle' }, label);
    });

    [[priceGrid, 'price-pane'], [macdGrid, 'macd-pane']].forEach(([rows, pane]) => {
        const g = add(plot, 'g', { 'clip-path': `url(#${pane})` });
        rows.forEach(([y, label]) => {
            add(g, 'path', { class: 'grid', d: `M0 ${y + 0.5}H${AXIS_X}` });
            add(g, 'text', { class: 'axis', x: 838, y: y + 4 }, label);
        });
    });

    add(plot, 'path', { class: 'divider', d: 'M0 301.5H896' });
    add(plot, 'path', { class: 'grid', d: `M0 452.5H896M${AXIS_X + 0.5} 0V480` });
}

function drawHistogram() {
    histogram.split(' ').forEach((item, i) => {
        const value = Math.round(Number(item.slice(1)) / 3);
        const height = Math.max(1, Math.abs(value));
        add(plot, 'rect', {
            x: Math.max(0, candleX(i) - 3),
            y: value < 0 ? ZERO_Y : ZERO_Y + 1 - height,
            width: 6,
            height,
            fill: histogramColors[item[0]]
        });
    });
}

function drawCandles() {
    candles.split(',').forEach((row, i) => {
        const [side, top, bottom, high, low] = row.trim().split(' ');
        const cls = side === 'g' ? 'up' : 'down';
        const x = candleX(i);
        add(plot, 'rect', { class: cls, x, y: toY(high), width: 1, height: toY(low) - toY(high) });
        add(plot, 'rect', { class: cls, x: x - 2, y: toY(top), width: 5, height: Math.max(1, toY(bottom) - toY(top)) });
    });
}

function drawLines() {
    const g = add(plot, 'g', { transform: 'scale(0.3333) translate(-180 -234)' });
    lines.forEach(([stroke, points]) => add(g, 'polyline', { class: 'line', stroke, points }));
}

function drawLastPrice() {
    add(plot, 'path', { class: 'last-line', d: `M0 173.5H${AXIS_X}` });
    add(plot, 'rect', { class: 'up', x: AXIS_X, y: 165, width: 62, height: 17, rx: 1 });
    add(plot, 'text', { class: 'last-label', x: 838, y: 178 }, '70609.0');
}

function drawSettings() {
    const g = add(plot, 'g', { fill: 'none', stroke: '#404040', 'stroke-width': 1.4 });
    add(g, 'path', { d: 'M857.5 467l3.500-6.500h6.500l3.500 6.500-3.500 6.500H861z' });
    add(g, 'circle', { cx: 864, cy: 467, r: 2 });
}

fillBook('asks', asks);
fillBook('bids', bids);
drawGrid();
drawHistogram();
drawLines();
drawCandles();
drawLastPrice();
drawSettings();
```
